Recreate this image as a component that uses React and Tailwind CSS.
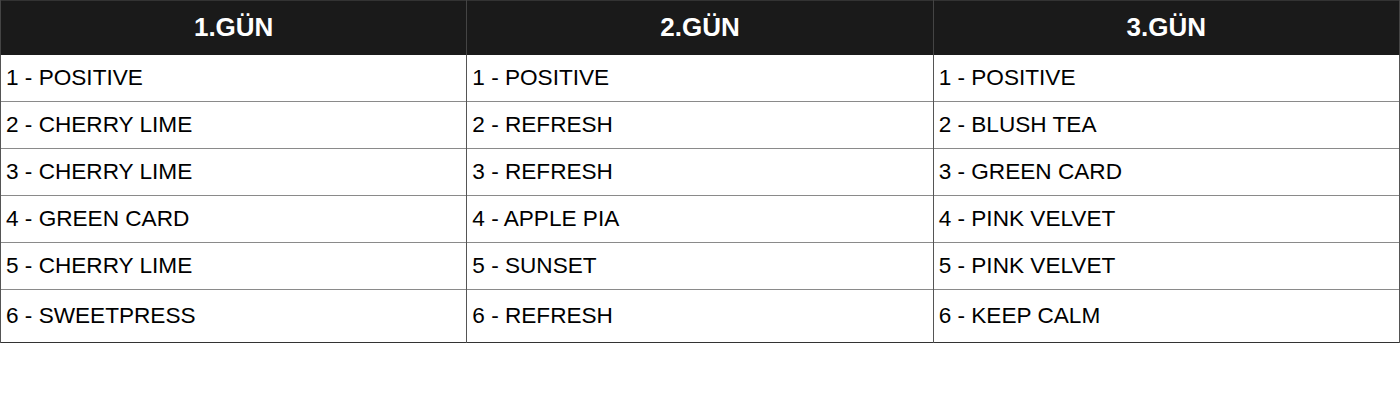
const days = [
    ["1 - POSITIVE", "1 - POSITIVE", "1 - POSITIVE"],
    ["2 - CHERRY LIME", "2 - REFRESH", "2 - BLUSH TEA"],
    ["3 - CHERRY LIME", "3 - REFRESH", "3 - GREEN CARD"],
    ["4 - GREEN CARD", "4 - APPLE PIA", "4 - PINK VELVET"],
    ["5 - CHERRY LIME", "5 - SUNSET", "5 - PINK VELVET"],
    ["6 - SWEETPRESS", "6 - REFRESH", "6 - KEEP CALM"],
];

const App = () => {
    return (
        <div className="w-[1400px] bg-white font-['Liberation_Sans',Arial,sans-serif]">
            <table className="w-full table-fixed border-collapse border border-[#333]">
                <thead>
                    <tr className="bg-[#1a1a1a] text-white h-[54px]">
                        {["1.GÜN", "2.GÜN", "3.GÜN"].map((day) => (
                            <th
                                key={day}
                                className="text-[26px] font-bold text-center border-x border-[#444]"
                            >
                                {day}
                            </th>
                        ))}
                    </tr>
                </thead>
                <tbody className="text-[22.6px] text-black">
                    {days.map((row, index) => (
                        <tr
                            key={index}
                            className={`border-b border-b-[#8a8a8a] ${
                                index === days.length - 1
                                    ? "h-[53px] border-b-[#333]"
                                    : "h-[47px]"
                            }`}
                        >
                            {row.map((cell, i) => (
                                <td
                                    key={i}
                                    className="px-[5px] border-x border-[#555] align-middle"
                                >
                                    {cell}
                                </td>
                            ))}
                        </tr>
                    ))}
                </tbody>
            </table>
        </div>
    );
};

export default App;
